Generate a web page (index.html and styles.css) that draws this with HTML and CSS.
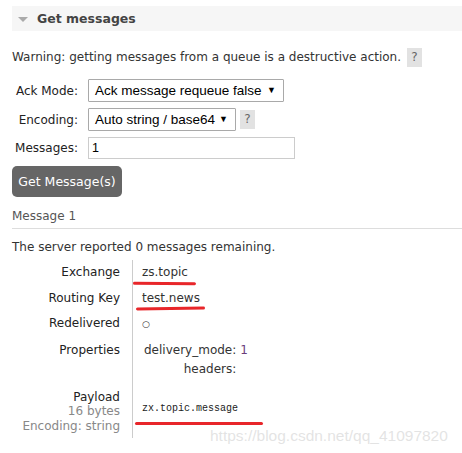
FILE: index.html
```html
<!DOCTYPE html>
<html>
<head>
<meta charset="utf-8">
<link rel="stylesheet" href="styles.css">
</head>
<body>
<div class="page">
  <div class="section-head">
    <span class="tri"></span>
    <span class="section-title">Get messages</span>
  </div>
  <p class="warning">Warning: getting messages from a queue is a destructive action. <span class="help">?</span></p>
  <div class="form">
    <label class="flabel">Ack Mode:</label>
    <div class="fctl"><div class="select wide">Ack message requeue false<span class="arrow">▼</span></div></div>
    <label class="flabel">Encoding:</label>
    <div class="fctl"><div class="select">Auto string / base64<span class="arrow">▼</span></div><span class="help">?</span></div>
    <label class="flabel">Messages:</label>
    <div class="fctl"><div class="input">1</div></div>
  </div>
  <button class="btn">Get Message(s)</button>
  <h3 class="msg-title">Message 1</h3>
  <p class="remaining">The server reported 0 messages remaining.</p>
  <div class="details">
    <div class="dl">Exchange</div>
    <div class="dv"><span class="mark m1">zs.topic</span></div>
    <div class="dl">Routing Key</div>
    <div class="dv"><span class="mark m2">test.news</span></div>
    <div class="dl">Redelivered</div>
    <div class="dv"><span class="circle">○</span></div>
    <div class="dl">Properties</div>
    <div class="dv">
      <div class="props">
        <span class="pk">delivery_mode:</span><span class="pv">1</span>
        <span class="pk">headers:</span><span class="pv"></span>
      </div>
    </div>
    <div class="dl payload-l">Payload<div class="sub">16 bytes</div><div class="sub">Encoding: string</div></div>
    <div class="dv payload-v"><span class="mark m3 mono">zx.topic.message</span></div>
  </div>
  <div class="watermark">https://blog.csdn.net/qq_41097820</div>
</div>
</body>
</html>
```
FILE: styles.css
```css
html, body { margin: 0; padding: 0; background: #fff; }
body { font-family: "DejaVu Sans", Verdana, sans-serif; font-size: 12px; color: #333; }
.page { position: relative; padding-left: 12px; height: 453px; overflow: hidden; }
.section-head { margin-top: 6px; height: 25px; background: #f6f6f6; display: flex; align-items: center; padding-left: 6px; }
.tri { width: 0; height: 0; border-left: 5px solid transparent; border-right: 5px solid transparent; border-top: 5px solid #aaa; margin-right: 9px; margin-top: 1px; }
.section-title { font-weight: bold; font-size: 12.5px; color: #444; }
.warning { margin: 16px 0 0; line-height: 20px; display: flex; align-items: center; }
.warning .help { margin-left: 6px; }
.help { display: inline-block; background: #e2e2e2; color: #666; width: 15px; height: 19px; line-height: 19px; text-align: center; margin-left: 4px; font-size: 12px; }
.form { display: grid; grid-template-columns: 66px auto; column-gap: 10px; row-gap: 6px; margin-top: 12px; align-items: center; }
.flabel { text-align: right; color: #222; font-size: 12px; white-space: nowrap; }
.fctl { display: flex; align-items: center; }
.select { font-family: "Liberation Sans", Arial, sans-serif; font-size: 13.5px; color: #000; border: 1px solid #a9a9a9; line-height: 21px; padding-left: 6px; box-sizing: border-box; height: 23px; width: 148px; position: relative; border-radius: 1px; }
.select.wide { width: 196px; }
.arrow { position: absolute; right: 7px; top: 0; font-size: 9px; }
.input { border: 1px solid #ccc; width: 207px; height: 22px; box-sizing: border-box; font-family: "Liberation Sans", Arial, sans-serif; font-size: 12.5px; color: #000; padding-left: 3px; line-height: 20px; }
.fctl .help { margin-left: 4px; }
.btn { display: block; margin-top: 7px; background: #666; color: #fff; border: none; border-radius: 5px; width: 110px; height: 31px; font-family: "DejaVu Sans", Verdana, sans-serif; font-size: 12.5px; padding: 0; }
.msg-title { margin: 12px 0 0; font-weight: normal; font-size: 12px; color: #555; padding-bottom: 5px; border-bottom: 1px solid #ddd; }
.remaining { margin: 11px 0 0; color: #333; }
.details { display: grid; grid-template-columns: 120px 1fr; margin-top: 6px; }
.dl { text-align: right; padding-right: 12px; color: #222; line-height: 15.5px; padding-top: 5px; padding-bottom: 5px; white-space: nowrap; }
.dv { border-left: 1px solid #ccc; padding-left: 9px; line-height: 15.5px; padding-top: 5px; padding-bottom: 5px; }
.mark { position: relative; display: inline-block; }
.mark::after { content: ""; position: absolute; left: -9px; right: -8px; bottom: -4px; height: 3px; background: #e8262a; border-radius: 2px; transform: rotate(0.6deg); }
.m2::after { left: -6px; right: -5px; transform: rotate(-0.8deg); }
.m3::after { left: -7px; right: -25px; bottom: -9px; transform: none; }
.circle { font-size: 9px; color: #333; }
.props { display: grid; grid-template-columns: auto auto; justify-content: start; column-gap: 4px; row-gap: 4px; padding-left: 2px; }
.pk { text-align: right; }
.pv { color: #6a3d7a; }
.payload-l { padding-top: 7px; line-height: 14.5px; }
.sub { color: #888; }
.payload-v { padding-top: 17px; }
.mono { font-family: "Liberation Mono", "DejaVu Sans Mono", monospace; font-size: 10px; color: #222; }
.watermark { position: absolute; left: 210px; top: 427px; font-family: "Liberation Sans", Arial, sans-serif; font-size: 15.5px; color: rgba(200,200,200,0.5); white-space: nowrap; }
```
